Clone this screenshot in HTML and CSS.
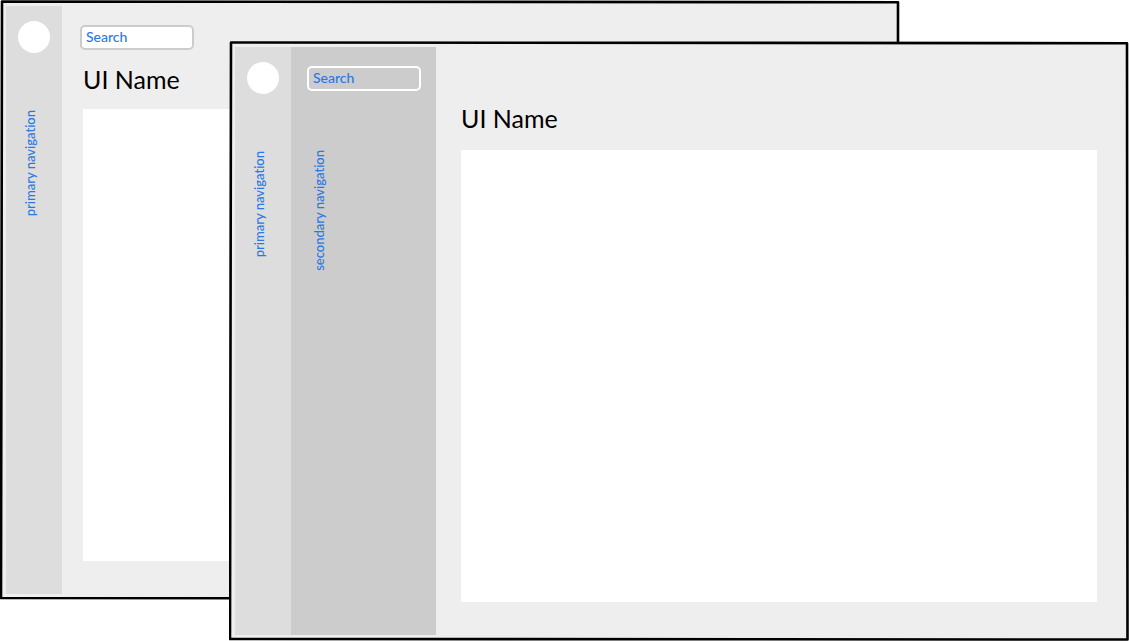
FILE: index.html
```html
<!DOCTYPE html>
<html lang="en">
<head>
<meta charset="utf-8">
<title>UI Name</title>
<link rel="stylesheet" href="styles.css">
</head>
<body>
<div class="stage">
  <section class="window window-back">
    <svg class="frame" viewBox="0 0 900 600" preserveAspectRatio="none" aria-hidden="true"><path d="M2 1.5L898 2.2L897.8 599L1 598Z"/></svg>
    <nav class="primary">
      <span class="avatar"></span>
      <a class="nav-label" href="#">primary navigation</a>
    </nav>
    <main class="main">
      <input class="search" type="search" placeholder="Search" aria-label="Search">
      <h1 class="title">UI Name</h1>
      <div class="canvas"></div>
    </main>
  </section>
  <section class="window window-front">
    <svg class="frame" viewBox="0 0 900 600" preserveAspectRatio="none" aria-hidden="true"><path d="M2 1.5L898 2.2L898.5 598.5L1 598Z"/></svg>
    <nav class="primary">
      <span class="avatar"></span>
      <a class="nav-label" href="#">primary navigation</a>
    </nav>
    <nav class="secondary">
      <input class="search search-outline" type="search" placeholder="Search" aria-label="Search">
      <a class="nav-label" href="#">secondary navigation</a>
    </nav>
    <main class="main">
      <h1 class="title">UI Name</h1>
      <div class="canvas"></div>
    </main>
  </section>
</div>
</body>
</html>
```
FILE: styles.css
```css
* {
  box-sizing: border-box;
}

body {
  margin: 0;
  background: #fff;
  color: #000;
  font-family: Lato, "Open Sans", sans-serif;
  font-size: 14px;
  font-variant-ligatures: none;
}

.stage {
  display: grid;
  min-height: 100vh;
}

.window {
  grid-area: 1 / 1;
  position: relative;
  isolation: isolate;
  display: flex;
  padding: 6px;
}

.window-back {
  margin: 0 229px 41px 0;
}

.window-front {
  margin: 41px 0 0 229px;
}

.frame {
  position: absolute;
  inset: 0;
  width: 100%;
  height: 100%;
  z-index: -1;
}

.frame path {
  fill: #eee;
  stroke: #000;
  stroke-width: 2.6;
  stroke-linejoin: round;
  vector-effect: non-scaling-stroke;
}

.primary,
.secondary {
  display: flex;
  flex-direction: column;
  flex: none;
}

.primary {
  width: 56px;
  padding: 15px 12px;
  gap: 57px;
  background: #ddd;
}

.secondary {
  width: 145px;
  padding: 19px 15px 19px 16px;
  gap: 59px;
  background: #ccc;
}

.avatar {
  width: 32px;
  height: 32px;
  border-radius: 50%;
  background: #fff;
}

.nav-label {
  align-self: flex-start;
  writing-mode: vertical-rl;
  transform: rotate(180deg);
  margin-left: 4px;
  color: #2b78e4;
  font-size: 13px;
  font-weight: 500;
  line-height: 16px;
  text-decoration: none;
}

.search {
  width: 114px;
  height: 25px;
  padding: 0 4px 2px;
  border: 2px solid #ccc;
  border-radius: 5px;
  background: #fff;
  color: #2b78e4;
  font: inherit;
  font-weight: 500;
  appearance: none;
}

.search::placeholder {
  color: #2b78e4;
  opacity: 1;
}

.search-outline {
  border-color: #fff;
  background: transparent;
}

.main {
  display: flex;
  flex: 1;
  flex-direction: column;
  padding: 19px 26px 33px 21px;
}

.window-front .main {
  padding: 57px 26px 33px 25px;
}

.main .search {
  margin-left: -3px;
}

.title {
  margin: 15px 0;
  font-size: 25px;
  font-weight: 400;
  line-height: 29px;
}

.window-front .title {
  margin: 0 0 17px;
}

.canvas {
  flex: 1;
  background: #fff;
}
```
